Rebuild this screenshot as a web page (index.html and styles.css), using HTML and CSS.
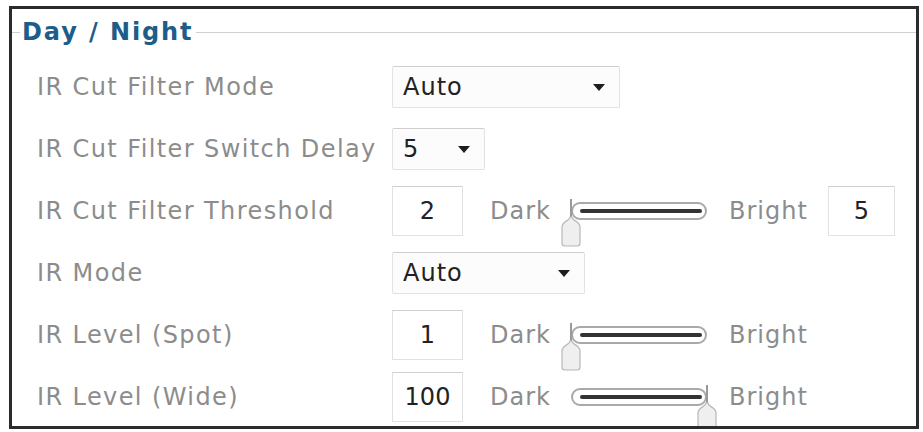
FILE: index.html
```html
<!DOCTYPE html>
<html lang="en">
<head>
    <meta charset="UTF-8">
    <title>Day / Night</title>
    <link rel="stylesheet" href="styles.css">
</head>
<body>

<div class="panel">
    <fieldset class="group">
        <legend>Day / Night</legend>

        <div class="row">
            <label class="name">IR Cut Filter Mode</label>
            <div class="select wide">Auto<span class="caret"></span></div>
        </div>

        <div class="row">
            <label class="name">IR Cut Filter Switch Delay</label>
            <div class="select narrow">5<span class="caret"></span></div>
        </div>

        <div class="row">
            <label class="name">IR Cut Filter Threshold</label>
            <div class="field">2</div>
            <span class="end dark">Dark</span>
            <div class="slider">
                <svg class="track" width="136" height="18" viewBox="0 0 136 18">
                    <rect x="1" y="1" width="134" height="16" rx="8" fill="#fff" stroke="#a9a9a9" stroke-width="2"/>
                    <rect x="9" y="7" width="122" height="4" rx="2" fill="#333"/>
                </svg>
                <svg class="thumb" style="left: 0%" width="22" height="48" viewBox="0 0 22 48">
                    <rect x="10" y="0" width="2" height="20" fill="#9a9a9a"/>
                    <path d="M10 18 C10 22 2 22 2 28 V44 Q2 47 5 47 H17 Q20 47 20 44 V28 C20 22 12 22 12 18 Z" fill="#efefef" stroke="#b8b8b8" stroke-width="1.2"/>
                </svg>
            </div>
            <span class="end">Bright</span>
            <div class="field last">5</div>
        </div>

        <div class="row">
            <label class="name">IR Mode</label>
            <div class="select mid">Auto<span class="caret"></span></div>
        </div>

        <div class="row">
            <label class="name">IR Level (Spot)</label>
            <div class="field">1</div>
            <span class="end dark">Dark</span>
            <div class="slider">
                <svg class="track" width="136" height="18" viewBox="0 0 136 18">
                    <rect x="1" y="1" width="134" height="16" rx="8" fill="#fff" stroke="#a9a9a9" stroke-width="2"/>
                    <rect x="9" y="7" width="122" height="4" rx="2" fill="#333"/>
                </svg>
                <svg class="thumb" style="left: 0%" width="22" height="48" viewBox="0 0 22 48">
                    <rect x="10" y="0" width="2" height="20" fill="#9a9a9a"/>
                    <path d="M10 18 C10 22 2 22 2 28 V44 Q2 47 5 47 H17 Q20 47 20 44 V28 C20 22 12 22 12 18 Z" fill="#efefef" stroke="#b8b8b8" stroke-width="1.2"/>
                </svg>
            </div>
            <span class="end">Bright</span>
        </div>

        <div class="row">
            <label class="name">IR Level (Wide)</label>
            <div class="field">100</div>
            <span class="end dark">Dark</span>
            <div class="slider">
                <svg class="track" width="136" height="18" viewBox="0 0 136 18">
                    <rect x="1" y="1" width="134" height="16" rx="8" fill="#fff" stroke="#a9a9a9" stroke-width="2"/>
                    <rect x="9" y="7" width="122" height="4" rx="2" fill="#333"/>
                </svg>
                <svg class="thumb" style="left: 100%" width="22" height="48" viewBox="0 0 22 48">
                    <rect x="10" y="0" width="2" height="20" fill="#9a9a9a"/>
                    <path d="M10 18 C10 22 2 22 2 28 V44 Q2 47 5 47 H17 Q20 47 20 44 V28 C20 22 12 22 12 18 Z" fill="#efefef" stroke="#b8b8b8" stroke-width="1.2"/>
                </svg>
            </div>
            <span class="end">Bright</span>
        </div>
    </fieldset>
</div>

</body>
</html>
```

FILE: styles.css
```css
body {
    margin: 0;
    background: #fff;
    font-family: "DejaVu Sans", Verdana, sans-serif;
}

.panel {
    margin: 6px 5px 0 9px;
    width: 904px;
    height: 417px;
    border: 3px solid #2b2b2b;
    overflow: hidden;
}

.group {
    margin: 9px 0 0 0;
    padding: 0 0 0 25px;
    border: none;
    border-top: 1px solid #cfcfcf;
    min-width: 0;
}

.group legend {
    margin-left: -17px;
    padding: 0 3px 0 2px;
    font-size: 24px;
    font-weight: bold;
    letter-spacing: 1.9px;
    color: #1c5d8a;
}

.row {
    display: flex;
    align-items: center;
    height: 62px;
}

.row:first-of-type {
    margin-top: 10px;
}

.name {
    width: 355px;
    flex: none;
    font-size: 24px;
    letter-spacing: 1.4px;
    color: #8c8c8c;
}

/* drop-down boxes */
.select {
    position: relative;
    box-sizing: border-box;
    height: 42px;
    padding-left: 10px;
    line-height: 40px;
    font-size: 24px;
    letter-spacing: 1px;
    color: #222;
    background: #fcfcfc;
    border: 1px solid #e2e2e2;
    border-top-color: #cfcfcf;
    border-radius: 2px;
}

.select.wide { width: 228px; }
.select.narrow { width: 93px; }
.select.mid { width: 193px; }

.caret {
    position: absolute;
    right: 14px;
    top: 17px;
    border-left: 6px solid transparent;
    border-right: 6px solid transparent;
    border-top: 7px solid #1e1e1e;
}

/* number boxes */
.field {
    box-sizing: border-box;
    width: 71px;
    height: 50px;
    line-height: 48px;
    text-align: center;
    font-size: 24px;
    color: #222;
    border: 1px solid #e2e2e2;
    border-top-color: #d0d0d0;
}

.field.last {
    width: 67px;
    margin-left: 20px;
}

.end {
    font-size: 24px;
    letter-spacing: 1px;
    color: #8c8c8c;
}

.end.dark {
    margin-left: 27px;
}

.slider {
    position: relative;
    width: 136px;
    height: 18px;
    margin: 0 22px 0 20px;
}

.track {
    display: block;
}

.thumb {
    position: absolute;
    top: -3px;
    margin-left: -11px;
}
```
